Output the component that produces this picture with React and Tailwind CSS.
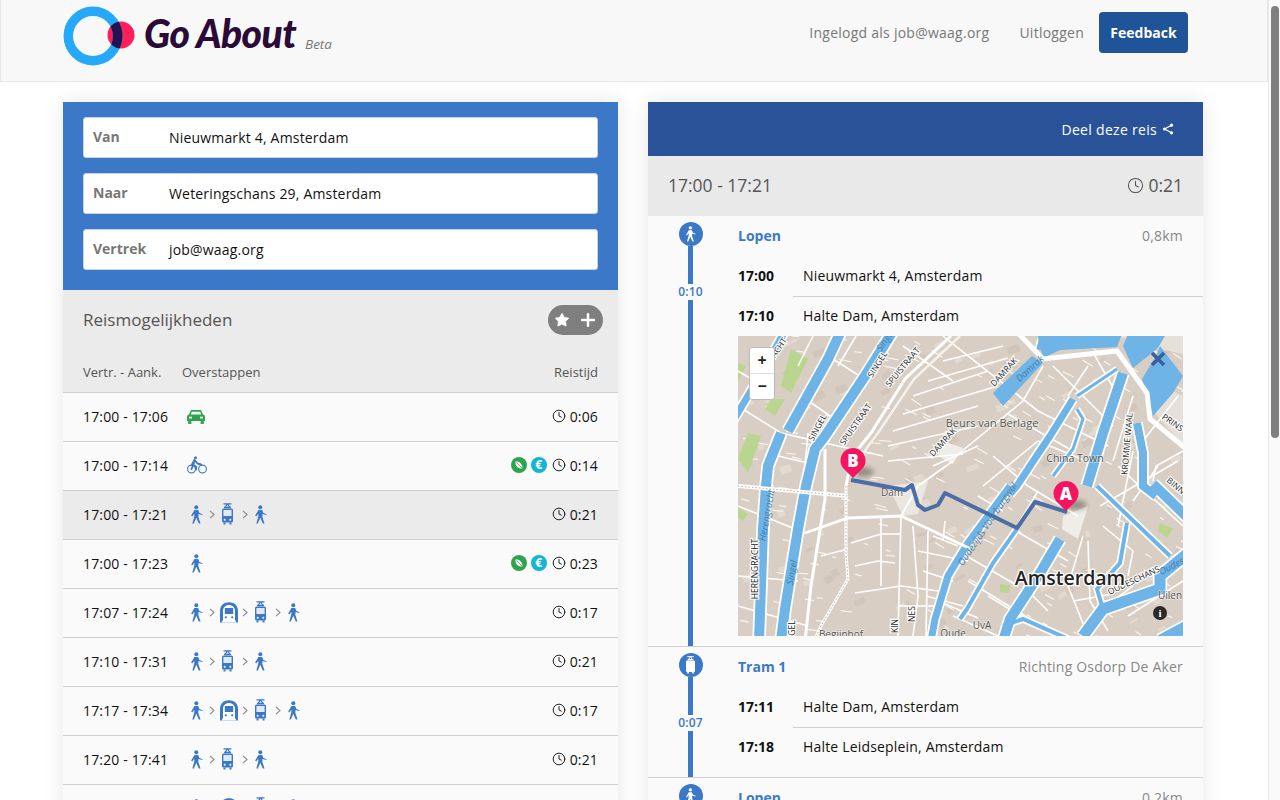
import React from "react";
import { Clock, Plus, Star } from "lucide-react";

function Walk({ className = "text-[#3b78c7]", w = 13, h = 19 }) {
  return (
    <svg width={w} height={h} viewBox="0 0 13 19" className={className} fill="currentColor">
      <circle cx="6.3" cy="2.2" r="2" />
      <path d="M4.4 5h3.8l1.2 3 3.2 1.2-.3.9-3.7-1-.3 2.6 2.2 6.8H8.8L6.3 12.800 3.800 18.500H2.300L4.300 11.500V8.700L2.200 11.400 1.200 10.600Z" />
    </svg>
  );
}

function Tram({ className = "text-[#3b78c7]", w = 13, h = 22 }) {
  return (
    <svg width={w} height={h} viewBox="0 0 13 22" className={className} fill="currentColor">
      <path d="M2.500.8h8M6.500.8 4 4.500M6.500.8 9 4.500" stroke="currentColor" strokeWidth="1.200" fill="none" />
      <rect x="3" y="3.700" width="7" height="1.500" />
      <rect x="1" y="5.500" width="11" height="14" rx="1.500" />
      <rect x="2.400" y="7" width="8.200" height="6" fill="#ffffff" opacity=".85" />
      <circle cx="3.700" cy="16.700" r="1" fill="#fff" />
      <circle cx="9.300" cy="16.700" r="1" fill="#fff" />
      <rect x="2.500" y="19.500" width="2" height="2" />
      <rect x="8.500" y="19.500" width="2" height="2" />
    </svg>
  );
}

function Metro() {
  return (
    <svg width="18" height="21" viewBox="0 0 18 21" className="mx-[-1.5px] text-[#3b78c7]" fill="currentColor">
      <path d="M0 20.500V9C0 3.500 4 .2 9 .2S18 3.500 18 9V20.500Z" />
      <path d="M3 9C3 5.500 5.500 3 9 3s6 2.500 6 6v9l1.500 2.500h-15L3 18Z" fill="#fff" />
      <rect x="4.800" y="6" width="8.400" height="6" fill="#3b78c7" />
      <circle cx="5.800" cy="15.300" r="1.100" fill="#3b78c7" />
      <circle cx="12.200" cy="15.300" r="1.100" fill="#3b78c7" />
    </svg>
  );
}

function Car() {
  return (
    <svg width="18" height="14" viewBox="0 0 18 14" fill="#2ea44f" className="mt-[2px]">
      <path d="M3.400 1.200C3.700.5 4.300 0 5 0h8c.7 0 1.300.5 1.600 1.200L16 4.600c1.100.3 2 1 2 2.400v4H0V7c0-1.400.9-2.100 2-2.400Z" />
      <rect x="1" y="11" width="3.500" height="3" rx="1" />
      <rect x="13.500" y="11" width="3.500" height="3" rx="1" />
      <path d="M4.800 1.800h8.400l1 2.700H3.800Z" fill="#fafafa" />
      <rect x="2" y="6.700" width="3" height="1.800" fill="#fafafa" />
      <rect x="13" y="6.700" width="3" height="1.800" fill="#fafafa" />
    </svg>
  );
}

function Bike() {
  return (
    <svg width="20" height="18" viewBox="0 0 20 18" fill="none" stroke="#3b78c7" strokeWidth="1.100">
      <circle cx="4.500" cy="13" r="3.900" />
      <circle cx="15.500" cy="13" r="3.900" />
      <circle cx="8.500" cy="1.700" r="1.500" fill="#3b78c7" stroke="none" />
      <path d="M7.500 4 5 8.500l4 2v3M7.500 4l3 3.500 3.500 1M4.500 13 7 7" strokeWidth="1.900" strokeLinecap="round" strokeLinejoin="round" />
    </svg>
  );
}

function Chev() {
  return (
    <svg width="6" height="9" viewBox="0 0 6 9" fill="none" stroke="#8a8a8a" strokeWidth="1.100">
      <path d="M1 .8 5 4.500 1 8.200" />
    </svg>
  );
}

function Leaf() {
  return (
    <span className="flex h-[16px] w-[16px] items-center justify-center rounded-full bg-[#2ea44f]">
      <svg width="10" height="10" viewBox="0 0 10 10" fill="#fff">
        <path d="M1.500 1.500C5 .8 8.500 3.500 8.500 8.500 4 8.800 1 6 1.500 1.500Z" />
        <path d="M2.500 2.500 9 9.200" stroke="#2ea44f" strokeWidth=".8" />
      </svg>
    </span>
  );
}

function Euro() {
  return (
    <span className="flex h-[16px] w-[16px] items-center justify-center rounded-full bg-[#12b5d8] text-[12px] font-bold leading-none text-white">
      €
    </span>
  );
}

const W = { t: "w" };
const T = { t: "t" };
const M = { t: "m" };
const rows = [
  { time: "17:00 - 17:06", icons: "car", dur: "0:06" },
  { time: "17:00 - 17:14", icons: "bike", dur: "0:14", badges: true },
  { time: "17:00 - 17:21", icons: [W, T, W], dur: "0:21", active: true },
  { time: "17:00 - 17:23", icons: [W], dur: "0:23", badges: true },
  { time: "17:07 - 17:24", icons: [W, M, T, W], dur: "0:17" },
  { time: "17:10 - 17:31", icons: [W, T, W], dur: "0:21" },
  { time: "17:17 - 17:34", icons: [W, M, T, W], dur: "0:17" },
  { time: "17:20 - 17:41", icons: [W, T, W], dur: "0:21" },
  { time: "17:27 - 17:44", icons: [W, M, T, W], dur: "0:17" },
];

function Icons({ icons }) {
  if (icons === "car")
    return <span className="ml-[5px] flex"><Car /></span>;
  if (icons === "bike")
    return <span className="ml-[5px] flex"><Bike /></span>;
  return (
    <span className="ml-[8px] flex items-center gap-[6px]">
      {icons.map((ic, i) => (
        <React.Fragment key={i}>
          {i > 0 && <Chev />}
          {ic.t === "w" && <Walk />}
          {ic.t === "t" && <Tram className="mr-[2px] text-[#3b78c7]" />}
          {ic.t === "m" && <Metro />}
        </React.Fragment>
      ))}
    </span>
  );
}

function Row({ r }) {
  return (
    <div className={`flex h-[49px] items-center border-b border-[#cfcfcf] pb-[2px] pl-5 pr-5 text-[14px] tracking-[0.15px] text-[#111] ${r.active ? "bg-[#ebebeb]" : "bg-[#fafafa]"}`}>
      <span className="w-[99px] shrink-0">{r.time}</span>
      <Icons icons={r.icons} />
      <span className="ml-auto flex items-center gap-[4px]">
        {r.badges && (
          <span className="mr-[1px] flex items-center gap-[4px]">
            <Leaf />
            <Euro />
          </span>
        )}
        <Clock size={14} strokeWidth={1.600} />
        <span>{r.dur}</span>
      </span>
    </div>
  );
}

function Field({ label, value }) {
  return (
    <div className="flex h-[41px] items-center rounded-[3px] border border-[#c9d3e0] bg-white pl-[9px] text-[14px]">
      <span className="w-[76px] pb-[2px] font-bold text-[#777]">{label}</span>
      <span className="tracking-[0.18px] text-[#111]">{value}</span>
    </div>
  );
}

const canals = [
  { d: "M47 -5 20 43 -5 85", w: 7 },
  { d: "M103 -5 90 23 50 95", w: 10 },
  { d: "M43 97 30 130 28 150 25 193 23 250 21 305", w: 10 },
  { d: "M155 -5 127 40 87 100 77 113 68 150 60 193 47 273 43 305", w: 10 },
  { d: "M335 63 312 100 292 130 279 150 272 158", w: 7 },
  { d: "M379 33 339 60", w: 3 },
  { d: "M385 37 365 97 349 150", w: 10 },
  { d: "M399 87 405 117 405 150 418 160", w: 8 },
  { d: "M339 73 345 83 335 113 315 140", w: 3 },
  { d: "M322 203 302 237 272 283 265 305", w: 10 },
  { d: "M279 193 255 227 229 273 222 283", w: 4 },
  { d: "M272 150 230 207 210 240 197 283 193 305", w: 7 },
  { d: "M359 150 432 220", w: 4 },
  { d: "M389 187 382 227 359 253 365 273", w: 4 },
  { d: "M450 217 422 240 422 253 365 273 345 300", w: 11 },
  { d: "M415 148 450 182", w: 10 },
  { d: "M450 290 422 305", w: 12 },
  { d: "M265 290 285 283 335 305", w: 4 },
  { d: "M310 -4 305 15", w: 14 },
];

const thin = [
  "M0 70 43 97 100 110 145 120",
  "M90 20 125 42",
  "M72 66 95 82",
  "M75 0 60 30",
  "M118 0 100 30",
  "M70 97 65 150",
  "M40 120 70 127",
  "M0 170 67 197",
  "M0 240 60 245",
  "M0 270 70 290",
  "M83 220 110 213",
  "M143 182 143 250",
  "M113 207 143 198",
  "M143 198 163 198",
  "M117 230 140 225 157 227",
  "M117 257 163 250 200 255",
  "M163 180 160 300",
  "M175 190 180 260 175 300",
  "M190 195 188 300",
  "M160 270 200 270",
  "M185 235 215 245",
  "M188 260 225 270",
  "M195 200 220 210",
  "M180 215 230 225",
  "M207 185 205 205",
  "M150 125 225 118",
  "M150 110 240 90",
  "M155 95 240 70",
  "M165 78 260 50",
  "M175 60 250 35",
  "M190 45 270 22",
  "M205 25 265 10",
  "M218 120 285 65 305 30",
  "M205 0 300 75 370 110",
  "M195 130 240 110",
  "M245 150 300 105",
  "M255 120 290 150 340 180",
  "M270 78 335 115",
  "M315 30 375 90",
  "M350 30 330 60",
  "M357 20 380 60",
  "M300 105 360 130",
  "M240 160 265 175",
  "M300 155 270 205",
  "M278 195 330 225",
  "M345 200 330 250 350 300",
  "M350 205 352 265 370 295",
  "M365 190 395 215 390 240",
  "M380 130 445 190",
  "M395 165 420 130",
  "M362 170 440 125",
  "M440 60 405 105",
  "M415 145 418 130 445 115",
  "M230 245 320 300",
  "M250 260 300 290",
  "M215 280 260 300",
  "M220 215 280 250",
  "M200 265 240 282",
  "M285 250 310 275",
  "M390 280 445 245",
  "M375 265 395 250",
  "M335 265 375 258",
  "M395 115 380 190",
  "M395 60 375 125",
  "M0 35 25 50",
  "M165 10 215 45",
];

const parks = [
  "M53 13 70 23 53 57 43 50Z",
  "M33 63 47 63 37 80 27 73Z",
  "M10 97 23 100 10 137 0 123Z",
  "M0 27 8 30 0 45Z",
  "M422 187 435 193 429 202 420 195Z",
  "M262 248 272 249 271 257 262 256Z",
  "M0 172 10 178 5 185 0 182Z",
];

const labels = [
  { t: "SINGEL", x: 142, y: 30, r: -58 },
  { t: "SINGEL", x: 82, y: 93, r: -62 },
  { t: "SPUISTRAAT", x: 167, y: 33, r: -50 },
  { t: "SPUISTRAAT", x: 120, y: 90, r: -55 },
  { t: "GRACHT", x: 40, y: 18, r: -55 },
  { t: "DAMRAK", x: 207, y: 108, r: -48 },
  { t: "DAMRAK", x: 268, y: 38, r: -48 },
  { t: "KROMME WAAL", x: 392, y: 108, r: -85 },
  { t: "PRINS", x: 433, y: 89, r: 35 },
  { t: "BINN", x: 436, y: 152, r: 40 },
  { t: "HERENGRACHT", x: 20, y: 233, r: -90 },
  { t: "GEL", x: 57, y: 292, r: -90 },
  { t: "KIN", x: 160, y: 290, r: -90 },
  { t: "NES", x: 177, y: 278, r: -90 },
  { t: "OUDESCHANS", x: 397, y: 247, r: -25 },
];

const water = [
  { t: "Damrak", x: 294, y: 35, r: -42 },
  { t: "Herengracht", x: 32, y: 180, r: -80 },
  { t: "Singel", x: 57, y: 237, r: -80 },
  { t: "Singel", x: 150, y: 6, r: -55 },
  { t: "Oudezijds Voorburgwal", x: 252, y: 190, r: -56 },
  { t: "Oudes", x: 435, y: 233, r: -28 },
];

const plain = [
  { t: "Beurs van Berlage", x: 254, y: 91, s: 11 },
  { t: "China Town", x: 337, y: 126, s: 10.500 },
  { t: "Dam", x: 154, y: 160, s: 10 },
  { t: "Uilen", x: 432, y: 263, s: 10 },
  { t: "UvA", x: 244, y: 293, s: 10 },
  { t: "Begijnhof", x: 103, y: 302, s: 10 },
  { t: "Oude", x: 215, y: 301, s: 10 },
];

// fixed pseudo-random texture of building patches and alleys between the streets
function texture() {
  const out = [];
  let s = 7;
  const rnd = () => {
    s = (s * 16807) % 2147483647;
    return (s % 10000) / 10000;
  };
  for (let i = 0; i < 130; i++) {
    const x = rnd() * 445;
    const y = rnd() * 300;
    const w = 4 + rnd() * 9;
    const h = 2 + rnd() * 6;
    const light = rnd() > 0.55;
    out.push(
      <rect key={`b${i}`} x={x} y={y} width={w} height={h} transform={`rotate(${-35 + rnd() * 20} ${x} ${y})`} fill={light ? "#e4dcd2" : "#cfc3b6"} opacity=".8" />
    );
  }
  for (let i = 0; i < 170; i++) {
    const x = rnd() * 445;
    const y = rnd() * 300;
    const l = 4 + rnd() * 9;
    const a = ((x < 150 ? 5 : 25) + rnd() * 10) * (Math.PI / 180);
    out.push(
      <path key={`a${i}`} d={`M${x.toFixed(1)} ${y.toFixed(1)}l${(l * Math.cos(a)).toFixed(1)} ${(l * Math.sin(a)).toFixed(1)}`} stroke="#f5f1ec" strokeWidth="1.300" />
    );
  }
  return out;
}

function MapArt() {
  return (
    <svg viewBox="0 0 445 300" width="445" height="300" className="block" style={{ fontFamily: "'Open Sans', sans-serif" }}>
      <defs>
        <filter id="pinblur" x="-50%" y="-50%" width="200%" height="200%"><feGaussianBlur stdDeviation="2.500" /></filter>
      </defs>
      <rect width="445" height="300" fill="#d9cec3" />
      {texture()}
      <path d="M325 180 350 170 340 203 324 193Z" fill="#f0ece7" />
      <path d="M150 150 190 145 180 178 165 180Z" fill="#ebe6e0" />
      <path d="M205 105 225 112 215 128 200 120Z" fill="#f0ece7" />
      <path d="M415 75 445 110 445 60 425 50Z" fill="#e6e0d9" />
      <path d="M380 0 445 0 445 18 400 8Z" fill="#e6e0d9" />
      {parks.map((d, i) => <path key={i} d={d} fill="#b9d58f" />)}
      {thin.map((d, i) => <path key={i} d={d} fill="none" stroke="#ffffff" strokeWidth="1.600" />)}
      {canals.map((c, i) => <path key={i} d={c.d} fill="none" stroke="#ffffff" strokeWidth={c.w + 3.500} />)}
      {canals.map((c, i) => <path key={i} d={c.d} fill="none" stroke="#6fb4e6" strokeWidth={c.w} />)}
      <path d="M299 -2 305 22 322 14 379 11 384 -2Z" fill="#6fb4e6" />
      <path d="M294 20 255 57 265 70 305 27Z" fill="#6fb4e6" />
      <path d="M422 10 445 40 435 57 415 80 409 60 404 43 419 18Z" fill="#6fb4e6" />
      <path d="M385 10 395 32 420 12 428 -2H390Z" fill="#6fb4e6" />
      <path d="M279 -4 305 23 379 15 409 57 412 83 447 112" fill="none" stroke="#ffffff" strokeWidth="5" />
      <path d="M213 0 167 43 133 97 120 113 110 140 108 150 108 217 110 243 83 290 76 305" fill="none" stroke="#ffffff" strokeWidth="3" />
      <path d="M108 150 108 217 110 243 83 290 76 305" fill="none" stroke="#b8aea3" strokeWidth="1" strokeDasharray="1.500 2" />
      <path d="M222 0 176 43 140 97 128 113 118 140" fill="none" stroke="#f4f1ed" strokeWidth="2.500" />
      <path d="M0 150 110 160" fill="none" stroke="#ffffff" strokeWidth="4" />
      <path d="M0 150 110 160" fill="none" stroke="#b8aea3" strokeWidth="1" strokeDasharray="1.500 2" />
      <path d="M67 197 110 182 163 180 233 213" fill="none" stroke="#ffffff" strokeWidth="2.800" />
      <path d="M87 113 87 163 73 250 67 305" fill="none" stroke="#ffffff" strokeWidth="3" />
      <path d="M163 180 180 150 215 125" fill="none" stroke="#ffffff" strokeWidth="2" />
      {labels.map((l, i) => (
        <text key={i} transform={`translate(${l.x} ${l.y}) rotate(${l.r})`} textAnchor="middle" fontSize="8.500" fill="#222" stroke="#fff" strokeWidth="2.200" paintOrder="stroke">{l.t}</text>
      ))}
      {water.map((l, i) => (
        <text key={i} transform={`translate(${l.x} ${l.y}) rotate(${l.r})`} textAnchor="middle" fontSize="9.500" fontStyle="italic" fill="#3f7fae">{l.t}</text>
      ))}
      {plain.map((l, i) => (
        <text key={i} x={l.x} y={l.y} textAnchor="middle" fontSize={l.s} fill="#555" stroke="#fff" strokeOpacity=".5" strokeWidth="1.500" paintOrder="stroke">{l.t}</text>
      ))}
      <text x="332" y="249" textAnchor="middle" fontSize="19.500" fontWeight="600" fill="#222" stroke="#fff" strokeWidth="2.500" paintOrder="stroke">Amsterdam</text>
      <path d="M414 17 426 29M426 17 414 29" stroke="#3a5f9a" strokeWidth="3.500" />
      <path d="M113 144 167 154 174 149 180 169 187 174 200 169 207 157 279 192 297 166 329 176" fill="none" stroke="#4a6ea8" strokeWidth="4" strokeLinejoin="round" />
      <ellipse cx="125" cy="136" rx="11" ry="5" fill="#000" opacity=".3" filter="url(#pinblur)" />
      <ellipse cx="338" cy="169" rx="11" ry="5" fill="#000" opacity=".3" filter="url(#pinblur)" />
      <path d="M115 142 105 132A12.500 12.500 0 1 1 125 132Z" fill="#f5145f" />
      <path d="M328 175 318 165A12.500 12.500 0 1 1 338 165Z" fill="#f5145f" />
      <text x="115" y="131" textAnchor="middle" fontSize="17" fontWeight="800" fill="#fff">B</text>
      <text x="328" y="164" textAnchor="middle" fontSize="17" fontWeight="800" fill="#fff">A</text>
    </svg>
  );
}

function Stop({ time, place, h }) {
  return (
    <div className={`flex items-center text-[14px] text-[#111] ${h}`}>
      <span className="w-[65px] shrink-0 font-bold">{time}</span>
      <span className="tracking-[0.18px]">{place}</span>
    </div>
  );
}

function Divider() {
  return <div className="ml-[55px] h-px bg-[#cfcfcf]" />;
}

function Segment({ icon, title, right, dur, children, last }) {
  return (
    <div className={`flex ${last ? "" : "border-b border-[#cfcfcf]"}`}>
      <div className="flex w-[85px] shrink-0 flex-col items-center pt-[6px]">
        <span className="flex h-[24px] w-[24px] items-center justify-center rounded-full bg-[#3b78c7] text-white">{icon}</span>
        <div className="h-[38px] w-[5px] bg-[#3b78c7]" />
        {dur && <span className="py-[1px] text-[12px] font-semibold leading-[14px] tracking-[0.2px] text-[#3b78c7]">{dur}</span>}
        <div className="w-[5px] flex-1 bg-[#3b78c7]" />
      </div>
      <div className="ml-[5px] min-w-0 flex-1">
        <div className="flex h-[40px] items-center justify-between pb-[2px] pr-5 text-[14px]">
          <span className="font-bold text-[#3b78c7]">{title}</span>
          <span className="tracking-[0.2px] text-[#888]">{right}</span>
        </div>
        {children}
      </div>
    </div>
  );
}

export default function App() {
  return (
    <div className="flex h-[800px] w-[1280px] overflow-hidden bg-white font-['Open_Sans',sans-serif]">
      <div className="w-[1268px] shrink-0">
        <header className="flex h-[82px] items-center border border-t-0 border-[#e7e7e7] bg-[#f8f8f8] pb-[17px] pl-[62px] pr-[79px]">
          <svg width="72" height="60" viewBox="0 0 72 60" className="mt-[8px] shrink-0">
            <defs>
              <clipPath id="redc"><circle cx="58" cy="29" r="13.500" /></clipPath>
            </defs>
            <circle cx="58" cy="29" r="13.500" fill="#ff1f5a" />
            <circle cx="30" cy="30" r="24.700" fill="none" stroke="#27a9fb" strokeWidth="9.500" />
            <circle cx="30" cy="30" r="24.700" fill="none" stroke="#231252" strokeWidth="9.500" clipPath="url(#redc)" />
          </svg>
          <span className="ml-[9px] mt-[3px] font-['Lato',sans-serif] text-[39px] font-black italic leading-none tracking-[-0.6px] text-[#2a0a36]">Go About</span>
          <span className="ml-[9px] mt-[25px] text-[13.5px] italic text-[#777]">Beta</span>
          <nav className="ml-auto flex items-center text-[14px] tracking-[0.25px] text-[#777]">
            <span>Ingelogd als job@waag.org</span>
            <span className="ml-[30px]">Uitloggen</span>
            <span className="ml-[15px] flex h-[41px] w-[89px] items-center justify-center rounded-[4px] bg-[#1f5499] font-bold tracking-normal text-white">Feedback</span>
          </nav>
        </header>
        <main className="flex gap-[30px] pl-[63px] pt-[20px]">
          <section className="w-[555px] shrink-0 shadow-[0_0_20px_rgba(0,0,0,0.1)]">
            <div className="flex flex-col gap-[15px] bg-[#3b78c7] px-5 pb-[20px] pt-[15px]">
              <Field label="Van" value="Nieuwmarkt 4, Amsterdam" />
              <Field label="Naar" value="Weteringschans 29, Amsterdam" />
              <Field label="Vertrek" value="job@waag.org" />
            </div>
            <div className="flex h-[102px] flex-col justify-between bg-[#ebebeb] pl-5 pr-[15px]">
              <div className="flex h-[60px] items-center justify-between">
                <span className="text-[17px] text-[#555]">Reismogelijkheden</span>
                <span className="flex h-[30px] w-[55px] items-center justify-center gap-[8px] rounded-full bg-[#7f7f7f] text-white">
                  <Star size={16} fill="currentColor" strokeWidth={1} />
                  <Plus size={20} strokeWidth={3} />
                </span>
              </div>
              <div className="flex h-[42px] items-center pr-[5px] pt-[4px] text-[13px] text-[#555]">
                <span className="w-[99px]">Vertr. - Aank.</span>
                <span>Overstappen</span>
                <span className="ml-auto">Reistijd</span>
              </div>
            </div>
            <div className="border-t border-[#cfcfcf]">
              {rows.map((r) => <Row key={r.time} r={r} />)}
            </div>
          </section>
          <section className="w-[555px] shrink-0 shadow-[0_0_20px_rgba(0,0,0,0.1)]">
            <div className="flex h-[54px] items-center justify-end gap-[5px] bg-[#2a5298] pr-[29px] text-[14px] tracking-[0.3px] text-white">
              <span>Deel deze reis</span>
              <svg width="12" height="12" viewBox="0 0 12 12" fill="none" stroke="#fff" strokeWidth="1.200">
                <path d="M9.500 2.200 2.500 6l7 3.800" />
                <circle cx="9.500" cy="2.200" r="1.600" fill="#fff" stroke="none" />
                <circle cx="2.500" cy="6" r="1.600" fill="#fff" stroke="none" />
                <circle cx="9.500" cy="9.800" r="1.600" fill="#fff" stroke="none" />
              </svg>
            </div>
            <div className="flex h-[60px] items-center justify-between bg-[#e9e9e9] px-5 pb-[2px] text-[17.5px] text-[#555]">
              <span>17:00 - 17:21</span>
              <span className="flex items-center gap-[4px]"><Clock size={17} strokeWidth={1.500} />0:21</span>
            </div>
            <div className="bg-[#fafafa]">
              <Segment icon={<Walk className="text-white" w={11} h={16} />} title="Lopen" right="0,8km" dur="0:10">
                <div className="pb-[10px]">
                  <Stop time="17:00" place="Nieuwmarkt 4, Amsterdam" h="h-[40px] pb-[1px]" />
                  <Divider />
                  <Stop time="17:10" place="Halte Dam, Amsterdam" h="h-[39px] pb-[2px]" />
                  <div className="relative mr-5 h-[300px] w-[445px] overflow-hidden">
                    <MapArt />
                    <div className="absolute left-[11px] top-[11px] flex w-[26px] flex-col overflow-hidden rounded-[3px] border border-[#bbb] bg-white text-center text-[16px] font-bold leading-[25px] text-[#222]">
                      <span className="h-[26px] border-b border-[#ddd]">+</span>
                      <span className="h-[25px]">−</span>
                    </div>
                    <span className="absolute left-[415px] top-[270px] flex h-[14px] w-[14px] items-center justify-center rounded-full bg-[#2a2a2a] font-['Liberation_Serif',serif] text-[11px] font-bold leading-none text-white">i</span>
                  </div>
                </div>
              </Segment>
              <Segment icon={<Tram className="text-white" w={11} h={18} />} title="Tram 1" right="Richting Osdorp De Aker" dur="0:07">
                <div className="pb-[10px]">
                  <Stop time="17:11" place="Halte Dam, Amsterdam" h="h-[40px] pb-[1px]" />
                  <Divider />
                  <Stop time="17:18" place="Halte Leidseplein, Amsterdam" h="h-[39px] pb-[2px]" />
                </div>
              </Segment>
              <Segment icon={<Walk className="text-white" w={11} h={16} />} title="Lopen" right="0,2km" last>
                <div className="h-[40px]" />
              </Segment>
            </div>
          </section>
        </main>
      </div>
      <div className="flex w-[12px] shrink-0 justify-center border-l border-[#e8e8e8] bg-[#fafafa] pt-[6px]">
        <div className="h-[432px] w-[8px] rounded-full bg-[#7f7f7f]" />
      </div>
    </div>
  );
}
